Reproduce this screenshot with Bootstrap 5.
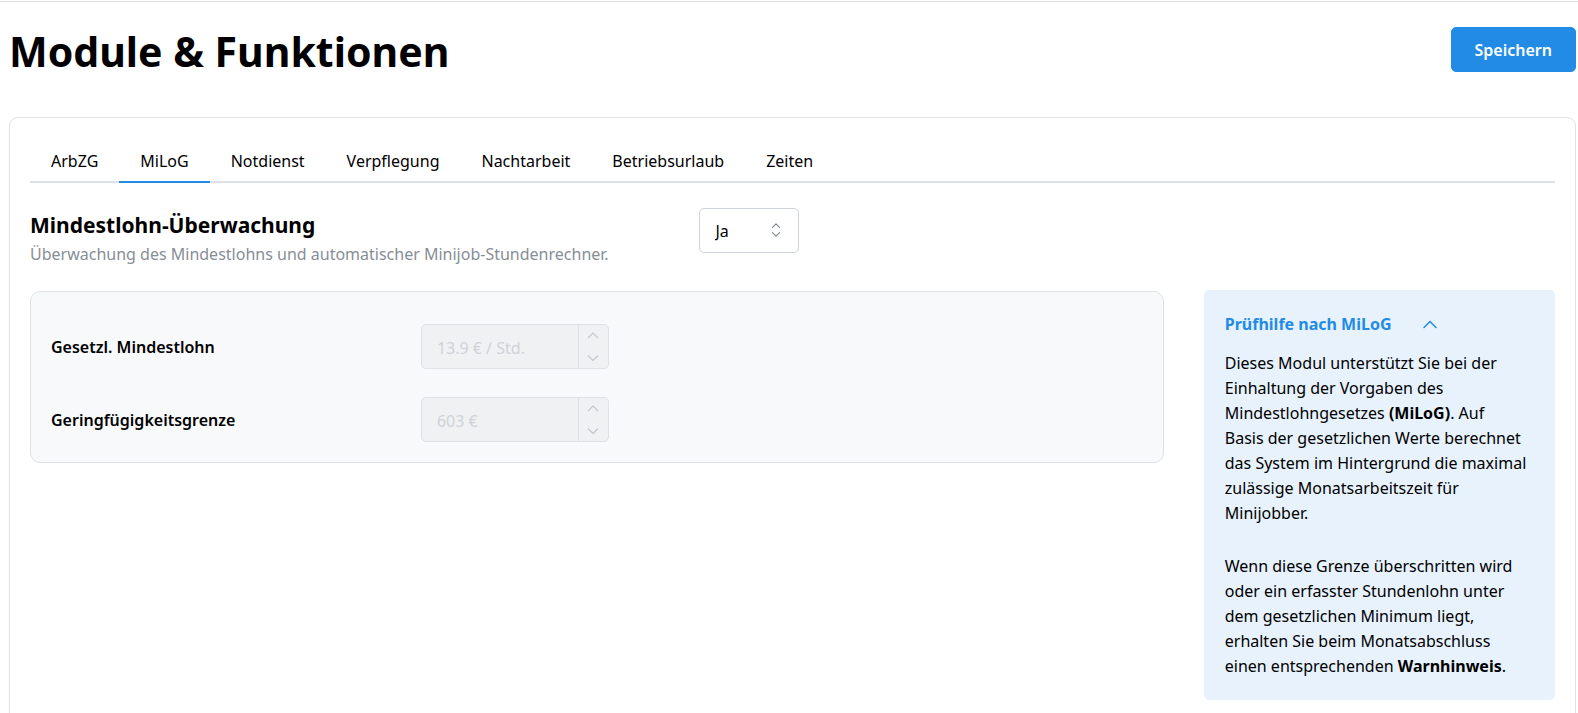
<!DOCTYPE html>
<html lang="de">
<head>
<meta charset="utf-8">
<meta name="viewport" content="width=device-width, initial-scale=1">
<title>Module &amp; Funktionen</title>
<link href="https://cdn.jsdelivr.net/npm/bootstrap@5.3.0/dist/css/bootstrap.min.css" rel="stylesheet">
<style>
  :root {
    --accent: #228be6;
    --line: #dee2e6;
    --field-line: #ced4da;
  }
  body {
    font-family: "Noto Sans", "Open Sans", sans-serif;
    font-size: 16px;
    line-height: 25px;
    color: #000;
    background: #fff;
  }
  .topline { height: 2px; border-bottom: 1px solid var(--line); }
  .page { padding: 25px 2px 0 9px; }
  .page-header { min-height: 50px; margin-bottom: 40px; }
  .page-title { font-size: 41px; line-height: 48px; font-weight: 700; }
  .btn-save {
    --bs-btn-bg: var(--accent);
    --bs-btn-border-color: var(--accent);
    --bs-btn-hover-bg: #1c7ed6;
    --bs-btn-hover-border-color: #1c7ed6;
    --bs-btn-color: #fff;
    --bs-btn-font-size: 16px;
    --bs-btn-font-weight: 600;
    --bs-btn-border-radius: 5px;
    --bs-btn-padding-x: 23px;
    height: 45px;
    padding-top: 10px;
    padding-bottom: 8px;
    line-height: 25px;
  }
  .panel { border: 1px solid var(--line); border-radius: 9px; padding: 20px; min-height: 620px; }
  .module-tabs {
    --bs-nav-tabs-border-width: 0;
    border-bottom: 2px solid var(--line);
    margin-bottom: 25px;
  }
  .module-tabs .nav-link {
    font-size: 16px;
    line-height: 25px;
    padding: 11px 21px 7px;
    color: #000;
    border: 0;
    border-bottom: 2px solid transparent;
    border-radius: 0;
    margin-bottom: -2px;
  }
  .module-tabs .nav-link.active { color: #000; border-color: var(--accent); }
  .section-title { font-size: 21px; line-height: 34px; font-weight: 700; }
  .section-note { color: #868e96; }
  .switch-col { padding-left: 34px; }
  .switch { width: 100px; }
  .switch .form-select {
    height: 45px;
    font-size: 16px;
    color: #000;
    padding: 0 15px;
    border-color: var(--field-line);
    border-radius: 5px;
    background-image: none;
  }
  .switch svg { right: 14px; top: 13px; pointer-events: none; }
  .body-row { --bs-gutter-x: 40px; margin-top: 23px; }
  .values { background: #f8f9fb; border: 1px solid var(--line); border-radius: 10px; padding: 32px 20px 20px; margin-top: 1px; }
  .values .row { --bs-gutter-x: 18px; }
  .values .row + .row { margin-top: 28px; }
  .values label { font-weight: 600; padding-top: 2px; }
  .stepper { width: 188px; height: 45px; border: 1px solid var(--line); border-radius: 5px; background: #f0f1f3; overflow: hidden; }
  .stepper .form-control {
    border: 0;
    border-radius: 0;
    background: transparent;
    color: #ced3d9;
    font-size: 16px;
    padding: 2px 15px 0;
  }
  .stepper-keys { flex: 0 0 30px; border-left: 1px solid var(--line); }
  .stepper-keys button { flex: 1; border: 0; padding: 0; background: transparent; color: #c3c8ce; display: flex; align-items: center; justify-content: center; }
  .hint { background: #e7f2fc; border-radius: 5px; padding: 22px 21px 21px; }
  .hint-toggle { border: 0; padding: 0; background: transparent; color: var(--accent); font-weight: 700; gap: 31px; margin-bottom: 14px; }
  .hint p { margin-bottom: 28px; }
  .hint p:last-child { margin-bottom: 0; }
</style>
</head>
<body>
<div class="topline"></div>
<main class="page">
  <header class="page-header d-flex justify-content-between align-items-start">
    <h1 class="page-title mb-0">Module &amp; Funktionen</h1>
    <button type="button" class="btn btn-primary btn-save">Speichern</button>
  </header>

  <section class="panel">
    <ul class="nav nav-tabs module-tabs">
      <li class="nav-item"><a class="nav-link" href="#arbzg">ArbZG</a></li>
      <li class="nav-item"><a class="nav-link active" aria-current="page" href="#milog">MiLoG</a></li>
      <li class="nav-item"><a class="nav-link" href="#notdienst">Notdienst</a></li>
      <li class="nav-item"><a class="nav-link" href="#verpflegung">Verpflegung</a></li>
      <li class="nav-item"><a class="nav-link" href="#nachtarbeit">Nachtarbeit</a></li>
      <li class="nav-item"><a class="nav-link" href="#betriebsurlaub">Betriebsurlaub</a></li>
      <li class="nav-item"><a class="nav-link" href="#zeiten">Zeiten</a></li>
    </ul>

    <div class="row g-0">
      <div class="col-5">
        <h2 class="section-title mb-0"><label for="monitoring">Mindestlohn-Überwachung</label></h2>
        <div class="section-note text-nowrap">Überwachung des Mindestlohns und automatischer Minijob-Stundenrechner.</div>
      </div>
      <div class="col switch-col">
        <div class="switch position-relative">
          <select class="form-select" id="monitoring">
            <option selected>Ja</option>
            <option>Nein</option>
          </select>
          <svg class="position-absolute" width="18" height="18" viewBox="0 0 18 18" fill="none" stroke="#868e96" stroke-width="1.3" stroke-linecap="round" stroke-linejoin="round" aria-hidden="true"><path d="M5.5 6.4 9 2.9l3.5 3.5M5.5 11.6 9 15.1l3.5-3.5"/></svg>
        </div>
      </div>
    </div>

    <div class="row body-row">
      <div class="col-9">
        <div class="values">
          <div class="row align-items-center">
            <div class="col-4"><label for="wage">Gesetzl. Mindestlohn</label></div>
            <div class="col-8">
              <div class="stepper d-flex">
                <input type="text" class="form-control" id="wage" value="13.9 € / Std." disabled>
                <div class="stepper-keys d-flex flex-column">
                  <button type="button" aria-label="Mindestlohn erhöhen" disabled><svg width="12" height="8" viewBox="0 0 12 8" fill="none" stroke="currentColor" stroke-width="1.2"><path d="M1 6l5-5 5 5"/></svg></button>
                  <button type="button" aria-label="Mindestlohn verringern" disabled><svg width="12" height="8" viewBox="0 0 12 8" fill="none" stroke="currentColor" stroke-width="1.2"><path d="M1 2.5l5 5 5-5"/></svg></button>
                </div>
              </div>
            </div>
          </div>
          <div class="row align-items-center">
            <div class="col-4"><label for="limit">Geringfügigkeitsgrenze</label></div>
            <div class="col-8">
              <div class="stepper d-flex">
                <input type="text" class="form-control" id="limit" value="603 €" disabled>
                <div class="stepper-keys d-flex flex-column">
                  <button type="button" aria-label="Grenze erhöhen" disabled><svg width="12" height="8" viewBox="0 0 12 8" fill="none" stroke="currentColor" stroke-width="1.2"><path d="M1 6l5-5 5 5"/></svg></button>
                  <button type="button" aria-label="Grenze verringern" disabled><svg width="12" height="8" viewBox="0 0 12 8" fill="none" stroke="currentColor" stroke-width="1.2"><path d="M1 2.5l5 5 5-5"/></svg></button>
                </div>
              </div>
            </div>
          </div>
        </div>
      </div>
      <div class="col-3">
        <aside class="hint">
          <button type="button" class="hint-toggle d-flex align-items-center" data-bs-toggle="collapse" data-bs-target="#hintText" aria-expanded="true" aria-controls="hintText">
            Prüfhilfe nach MiLoG
            <svg width="14" height="9" viewBox="0 0 14 9" fill="none" stroke="currentColor" stroke-width="1.5" stroke-linecap="round" stroke-linejoin="round" aria-hidden="true"><path d="M1 7.5l6-6 6 6"/></svg>
          </button>
          <div class="collapse show" id="hintText">
            <p>Dieses Modul unterstützt Sie bei der Einhaltung der Vorgaben des Mindestlohngesetzes <strong>(MiLoG)</strong>. Auf Basis&nbsp;der gesetzlichen Werte berechnet das System im Hintergrund die maximal zulässige Monatsarbeitszeit für Minijobber.</p>
            <p>Wenn diese Grenze überschritten wird oder ein erfasster Stundenlohn unter dem gesetzlichen Minimum liegt, erhalten Sie beim Monatsabschluss einen entsprechenden <strong>Warnhinweis</strong>.</p>
          </div>
        </aside>
      </div>
    </div>
  </section>
</main>
<script src="https://cdn.jsdelivr.net/npm/bootstrap@5.3.0/dist/js/bootstrap.bundle.min.js"></script>
</body>
</html>
